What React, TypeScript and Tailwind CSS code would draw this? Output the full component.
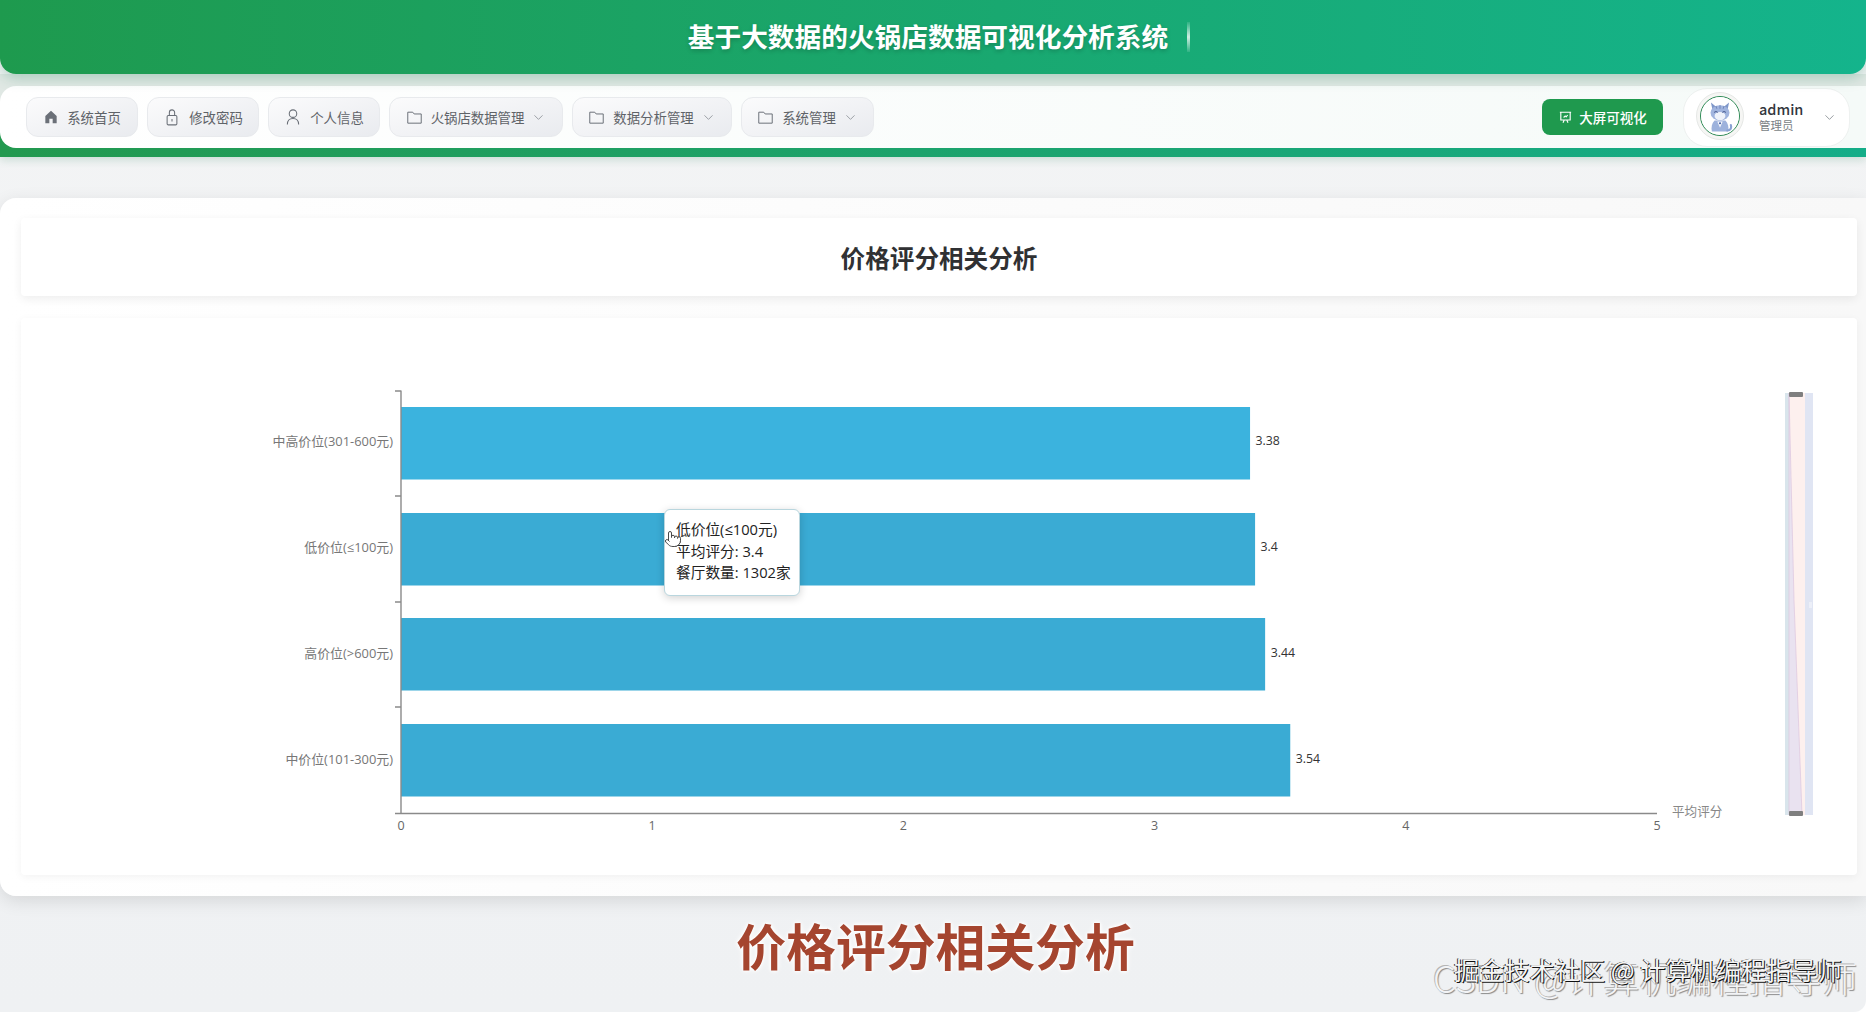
import { Pointer, ChevronDown } from "lucide-react";

const CJK = "font-['Noto_Sans_CJK_SC',sans-serif]";

function HomeIcon() {
  return (
    <svg viewBox="0 0 24 24" className="h-[16px] w-[16px] shrink-0" fill="#6b7078">
      <path d="M12 2.5 3.5 10.5V21.5H9.5V14.5H14.5V21.5H20.5V10.5Z" />
    </svg>
  );
}
function LockIcon() {
  return (
    <svg viewBox="0 0 24 24" className="h-[18px] w-[18px] shrink-0" fill="none" stroke="#6b7078" strokeWidth="1.4">
      <rect x="5.5" y="10" width="13" height="12.5" rx="1.5" />
      <path d="M8.5 10V6a3.5 3.5 0 0 1 7 0v4" />
      <path d="M12 14.5v3.5" />
    </svg>
  );
}
function UserIcon() {
  return (
    <svg viewBox="0 0 24 24" className="h-[18px] w-[18px] shrink-0" fill="none" stroke="#6b7078" strokeWidth="1.4">
      <circle cx="12" cy="7.5" r="5" />
      <path d="M4.5 22c0-5 3-8 7.5-8s7.5 3 7.5 8" />
    </svg>
  );
}
function FolderIcon() {
  return (
    <svg viewBox="0 0 24 24" className="h-[17px] w-[17px] shrink-0" fill="none" stroke="#6b7078" strokeWidth="1.4">
      <path d="M2.5 4.5h7l2 2.5h10v13h-19Z" strokeLinejoin="round" />
    </svg>
  );
}
function BoardIcon() {
  return (
    <svg viewBox="0 0 24 24" className="h-[15px] w-[15px] shrink-0" fill="none" stroke="#fff" strokeWidth="1.8">
      <path d="M3 3.5h18M4.5 3.5v12.5h15V3.5M8 20.5l2-4.5M16 20.5l-2-4.5M9 12l2.5-2.5 1.5 1.5 2.5-3" />
    </svg>
  );
}

function CatAvatar() {
  return (
    <svg viewBox="0 0 42 42" className="h-full w-full">
      <circle cx="21" cy="21" r="21" fill="#fff" />
      <path d="M15 26c-3 3-4 8-3 12h18c1-4 0-9-3-12Z" fill="#9db2dc" />
      <path d="M18 27l3 7 3-7Z" fill="#f4f6fb" />
      <path d="M29 37c4 0 5-3 4-6" fill="none" stroke="#8aa2d3" strokeWidth="2.4" strokeLinecap="round" />
      <path d="M11 6l2 10h16l2-10-6 5h-8Z" fill="#7f97c9" />
      <ellipse cx="21" cy="17.5" rx="10.5" ry="8.5" fill="#a0b4de" />
      <ellipse cx="21" cy="21" rx="6" ry="4.5" fill="#eef2fa" />
      <path d="M14.5 17q2-2 4 0M23.5 17q2-2 4 0" fill="none" stroke="#44568a" strokeWidth="1.1" />
      <path d="M21 13V9M17.5 13l-1-3M24.5 13l1-3" stroke="#6a80b4" strokeWidth="1" />
      <circle cx="21" cy="29" r="1.2" fill="#4a66a6" />
    </svg>
  );
}

const navItems = [
  { label: "系统首页", icon: <HomeIcon />, w: "w-[112px]", caret: false },
  { label: "修改密码", icon: <LockIcon />, w: "w-[112px]", caret: false },
  { label: "个人信息", icon: <UserIcon />, w: "w-[112px]", caret: false },
  { label: "火锅店数据管理", icon: <FolderIcon />, w: "w-[174px]", caret: true },
  { label: "数据分析管理", icon: <FolderIcon />, w: "w-[160px]", caret: true },
  { label: "系统管理", icon: <FolderIcon />, w: "w-[133px]", caret: true },
];

const bars = [
  { name: "中高价位(301-600元)", v: 3.38, top: 407, fill: "#3bb3de", cy: 441 },
  { name: "低价位(≤100元)", v: 3.4, top: 513, fill: "#3aabd4", cy: 547 },
  { name: "高价位(>600元)", v: 3.44, top: 618, fill: "#3aabd4", cy: 653 },
  { name: "中价位(101-300元)", v: 3.54, top: 724, fill: "#3aabd4", cy: 759 },
];

function Chart() {
  const x0 = 401;
  const unit = 251.2;
  return (
    <svg viewBox="21 318 1836 557" className="block h-full w-full font-['Open_Sans','Noto_Sans_CJK_SC',sans-serif]">
      {bars.map((b) => (
        <g key={b.name}>
          <rect x={x0} y={b.top} width={b.v * unit} height={72.5} fill={b.fill} />
          <text x={393} y={b.cy - 0.5} textAnchor="end" dominantBaseline="central" fontSize="12.9" fill="#777">
            {b.name}
          </text>
          <text x={x0 + b.v * unit + 5.5} y={b.cy - 0.5} dominantBaseline="central" fontSize="12.3" fill="#333">
            {b.v}
          </text>
        </g>
      ))}
      <path d="M401 390.5V813.5M395 391H401M395 496H401M395 602H401M395 707H401M395 813.5H1657" fill="none" stroke="#8a8a8a" strokeWidth="1.4" />
      {[0, 1, 2, 3, 4, 5].map((n) => (
        <text key={n} x={x0 + n * unit} y={825.5} textAnchor="middle" dominantBaseline="central" fontSize="12.5" fill="#666">
          {n}
        </text>
      ))}
      <text x={1672} y={811.5} dominantBaseline="central" fontSize="12.6" fill="#888">
        平均评分
      </text>
      <rect x="1785" y="393" width="28" height="422" fill="#e0e5f3" />
      <rect x="1785" y="393" width="4" height="422" fill="#d9e5ec" />
      <rect x="1789" y="393" width="16" height="422" fill="#fdf0ee" />
      <path d="M1789 393 L1794 600 L1802 815 L1789 815 Z" fill="#e9e2f0" stroke="#dcc6de" strokeWidth="0.7" />
      <rect x="1789" y="392" width="14" height="5" rx="1" fill="#7f7f7f" />
      <rect x="1789" y="811" width="14" height="5" rx="1" fill="#7f7f7f" />
      <path d="M1809 603h3M1809 605h3M1809 607h3" stroke="#fff" strokeWidth="0.8" />
    </svg>
  );
}

export default function App() {
  return (
    <div className={`relative flex h-[1012px] w-full flex-col overflow-hidden rounded-br-[12px] bg-gradient-to-b from-[#f3f4f5] to-[#eff1f3] ${CJK}`}>
      <header className="relative shrink-0">
        <div className="relative z-20 flex h-[74px] items-center justify-center rounded-b-[16px] bg-gradient-to-r from-[#1e9a4e] to-[#14b48c] shadow-[0_4px_14px_rgba(30,130,90,0.28)]">
          <h1 className="-mt-[1px] ml-[12px] text-[26.7px] font-bold text-white [text-shadow:0_2px_4px_rgba(0,0,0,0.2)]">
            基于大数据的火锅店数据可视化分析系统
          </h1>
          <span className="ml-[19px] h-[30px] w-[3px] bg-gradient-to-b from-white/10 via-white/80 to-white/10" />
        </div>
        <div className="bg-[#e0e8e4] pt-[12px]">
          <div className="relative z-10 flex h-[62px] items-center justify-between rounded-l-[16px] bg-gradient-to-r from-white to-[#f5faf8] pl-[26px] pr-[16px]">
            <nav className="flex items-center gap-[9px]">
              {navItems.map((item) => (
                <div
                  key={item.label}
                  className={`flex h-[40px] items-center justify-center gap-[8px] rounded-[12px] border border-[#e8eaed] bg-gradient-to-br from-[#fbfbfc] to-[#e9ebef] text-[13.4px] text-[#5f6368] ${item.w}`}
                >
                  {item.icon}
                  <span>{item.label}</span>
                  {item.caret && <ChevronDown className="-ml-[1px] h-[15px] w-[15px] text-[#80858c]" strokeWidth={1.2} />}
                </div>
              ))}
            </nav>
            <div className="flex items-center gap-[20px]">
              <button className="flex h-[36px] w-[121px] items-center justify-center gap-[6px] rounded-[8px] bg-[#1f994e] text-[13.5px] font-medium text-white">
                <BoardIcon />
                大屏可视化
              </button>
              <div className="flex h-[59px] w-[167px] items-center rounded-[24px] border border-[#eef1f0] bg-white pl-[12px] pr-[12px]">
                <div className="-mt-[2px] h-[48px] w-[48px] shrink-0 rounded-full border border-[#e6e8e6] bg-[#f6f6f4] p-[3px]">
                  <div className="h-[40px] w-[40px] overflow-hidden rounded-full border-[1.5px] border-[#2d8a55]">
                    <CatAvatar />
                  </div>
                </div>
                <div className="ml-[15px] flex flex-1 flex-col -mt-[2px]">
                  <span className="text-[14.5px] font-medium leading-[19px] text-[#33373d]">admin</span>
                  <span className="text-[11.5px] leading-[15px] text-[#7a7f86]">管理员</span>
                </div>
                <ChevronDown className="h-[15px] w-[15px] text-[#777c83]" strokeWidth={1.2} />
              </div>
            </div>
          </div>
          <div className="-mt-[16px] h-[25px] bg-gradient-to-r from-[#22994f] to-[#14ad88] shadow-[0_3px_8px_rgba(40,130,90,0.2)]" />
        </div>
      </header>

      <main className="mt-[41px] flex h-[698px] shrink-0 flex-col gap-[22px] rounded-l-[16px] bg-gradient-to-r from-white to-[#f8f8f8] pb-[21px] pl-[21px] pr-[9px] pt-[20px] shadow-[0_5px_18px_rgba(0,0,0,0.11)]">
        <div className="flex h-[78px] shrink-0 items-center justify-center rounded-[4px] bg-white shadow-[0_3px_10px_rgba(0,0,0,0.07)]">
          <h2 className="text-[24.6px] font-bold text-[#303133]">价格评分相关分析</h2>
        </div>
        <div className="relative min-h-0 flex-1 rounded-[4px] bg-white shadow-[0_2px_8px_rgba(0,0,0,0.05)]">
          <Chart />
          <div className="absolute left-[643px] top-[191px] h-[87px] w-[136px] rounded-[6px] border border-[#b9d6de] bg-white pl-[11px] pt-[9px] font-['Open_Sans','Noto_Sans_CJK_SC',sans-serif] text-[14.7px] leading-[21.7px] text-[#222] shadow-[0_2px_8px_rgba(0,0,0,0.18)]">
            <div>低价位(≤100元)</div>
            <div>平均评分: 3.4</div>
            <div>餐厅数量: 1302家</div>
          </div>
          <Pointer className="absolute left-[643px] top-[212px] h-[18px] w-[18px] fill-white text-[#444]" strokeWidth={1.3} />
        </div>
      </main>

      <footer className="flex flex-1 items-center justify-center">
        <p className="-mt-[19px] ml-[5px] text-[49.8px] font-semibold text-[#a5452f] [text-shadow:0_0_3px_#fff,0_0_4px_#fff,0_0_6px_#fff]">
          价格评分相关分析
        </p>
      </footer>

      <span className="absolute left-[1433px] top-[952px] whitespace-nowrap text-[36.3px] font-light leading-[50px] text-[#f3f4f6] [text-shadow:1px_1px_1px_#8a8a8a,-1px_-1px_0_#b5b5b5]">
        CSDN @计算机编程指导师
      </span>
      <span className="absolute left-[1454px] top-[951px] whitespace-nowrap text-[25.2px] leading-[36px] text-[#f5f5f5] [text-shadow:1px_1px_0_#111,-1px_0_0_#333]">
        掘金技术社区 @ 计算机编程指导师
      </span>
    </div>
  );
}
